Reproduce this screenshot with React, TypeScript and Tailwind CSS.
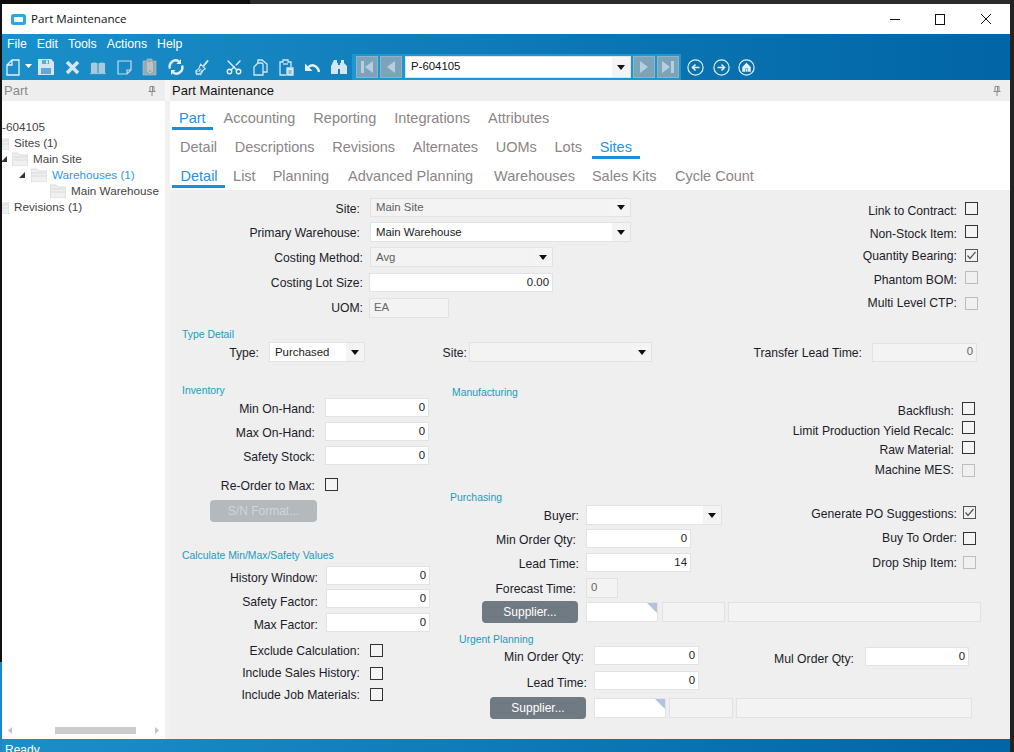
import React from "react";
import { Scissors } from "lucide-react";

const sans = "font-['Liberation_Sans',Arial,sans-serif]";

function Lbl({ className, children }: { className: string; children: React.ReactNode }) {
  return <span className={"shrink-0 text-right whitespace-nowrap text-[12.2px] leading-[14px] pt-[2px] text-[#1c1c2a] " + className}>{children}</span>;
}
function Arrow() {
  return (
    <svg width="8" height="5" viewBox="0 0 8 5" className="shrink-0"><path d="M0 0h8L4 5z" fill="#111" /></svg>
  );
}
function Select({ className, value, disabled }: { className: string; value?: string; disabled?: boolean }) {
  return (
    <div className={"shrink-0 flex items-stretch border border-[#e2e2e2] text-[11.4px] " + (disabled ? "bg-[#f3f3f3] text-[#5f5f5f] " : "bg-white text-[#222] ") + className}>
      <span className="flex-1 pl-[5px] pt-[1px] flex items-center">{value}</span>
      <span className="w-[18px] flex items-center justify-center bg-[#f4f4f4]"><Arrow /></span>
    </div>
  );
}
function Input({ className, value, disabled, left }: { className: string; value?: string; disabled?: boolean; left?: boolean }) {
  return (
    <div className={"shrink-0 flex items-center border border-[#e2e2e2] text-[11.4px] " + (left ? "justify-start pl-[4px] " : "justify-end pr-[3px] ") + (disabled ? "bg-[#f3f3f3] text-[#666] " : "bg-white text-[#222] ") + className}>{value}</div>
  );
}
function Box({ className = "", checked, disabled }: { className?: string; checked?: boolean; disabled?: boolean }) {
  return (
    <div className={"shrink-0 w-[13px] h-[13px] flex items-center justify-center border " + (disabled ? "border-[#bdbdbd] bg-[#f0f0f0] " : checked ? "border-[#555] bg-[#f2f2f2] " : "border-[#333] bg-[#f4f4f4] ") + className}>
      {checked && (
        <svg width="11" height="11" viewBox="0 0 11 11"><path d="M1.5 5.5 4 8.5 9.5 2" stroke="#555" strokeWidth="1.2" fill="none" /></svg>
      )}
    </div>
  );
}
function Heading({ className, children }: { className: string; children: React.ReactNode }) {
  return <div className={"h-[12px] leading-[14px] text-[10.4px] text-[#1b9bbd] whitespace-nowrap " + className}>{children}</div>;
}
function Check({ className, label, checked, disabled, box, lbl = "" }: { className: string; label: string; checked?: boolean; disabled?: boolean; box: string; lbl?: string }) {
  return (
    <div className={"flex items-center justify-end h-[13px] " + className}>
      <Lbl className={lbl}>{label}</Lbl>
      <Box className={box} checked={checked} disabled={disabled} />
    </div>
  );
}
function Lookup({ className }: { className: string }) {
  return (
    <div className={"relative shrink-0 bg-white border border-[#e2e2e2] overflow-hidden " + className}>
      <svg width="10" height="10" viewBox="0 0 10 10" className="absolute top-0 right-0"><path d="M0 0h10v10z" fill="#b3c5de" /></svg>
    </div>
  );
}
function Supplier({ className }: { className: string }) {
  return (
    <div className={"shrink-0 w-[96px] h-[22px] rounded-[4px] bg-[#6f7a82] text-white text-[12px] flex items-center justify-center " + className}>Supplier...</div>
  );
}
function Tab({ children, active, className }: { children: string; active?: boolean; className: string }) {
  return (
    <div className={"pt-[8px] h-[29px] leading-[18px] text-[14.5px] border-b-[3px] whitespace-nowrap " + (active ? "text-[#2a90e2] border-[#1a8fe0] " : "text-[#8b8585] border-transparent ") + className}>{children}</div>
  );
}
function Folder({ className }: { className: string }) {
  return (
    <svg width="16" height="14" viewBox="0 0 16 14" className={"shrink-0 " + className}>
      <path d="M0 1h6l2 2h8v11H0z" fill="#efefef" stroke="#d6d6d6" strokeWidth="0.8" />
      <path d="M0 5h16M0 8h16" stroke="#dcdcdc" strokeWidth="1" />
    </svg>
  );
}
function Tri({ className }: { className: string }) {
  return (
    <svg width="6" height="6" viewBox="0 0 6 6" className={"shrink-0 " + className}><path d="M6 0v6H0z" fill="#333" /></svg>
  );
}

const ic = "#d3e6f2";
const dim = "#a9c9dc";
function Tool({ children, className }: { children: React.ReactNode; className: string }) {
  return <div className={"shrink-0 w-[16px] h-[16px] flex items-center justify-center " + className}>{children}</div>;
}
function NavBtn({ d }: { d: string }) {
  return (
    <div className="w-[22px] h-[22px] shrink-0 bg-[#7ba4bb] border border-[#8fb3c8] flex items-center justify-center">
      <svg width="16" height="16" viewBox="0 0 16 16"><path d={d} fill="#b5cfdf" /></svg>
    </div>
  );
}
function Circle({ children, className }: { children: React.ReactNode; className: string }) {
  return (
    <svg width="17" height="17" viewBox="0 0 17 17" className={"shrink-0 " + className}>
      <circle cx="8.5" cy="8.5" r="7.6" fill="none" stroke="#e3eff6" strokeWidth="1.2" />
      {children}
    </svg>
  );
}

export default function App() {
  return (
    <div className={"w-[1014px] h-[752px] flex bg-[#222] overflow-hidden " + sans}>
      <div className="w-[2px] flex flex-col shrink-0">
        <div className="h-[662px] bg-[#111]" />
        <div className="flex-1 bg-[#1a8ac6]" />
      </div>
      <div className="w-[1008px] shrink-0 flex flex-col">
        <div className="h-[4px] flex shrink-0">
          <div className="w-[248px] bg-[#0c0c0c]" />
          <div className="flex-1 bg-[#2b2b2b]" />
        </div>
        {/* title bar */}
        <div className="h-[30px] bg-white flex items-center shrink-0">
          <svg width="15" height="11" viewBox="0 0 15 11" className="ml-[9px] mb-[-1px]">
            <rect width="15" height="11" rx="2.5" fill="#2aa8e6" />
            <rect x="3" y="3" width="9" height="5" rx="1" fill="#fff" />
          </svg>
          <span className="ml-[5px] text-[11.6px] text-[#111] font-['Open_Sans',sans-serif]">Part Maintenance</span>
          <svg width="116" height="14" viewBox="0 0 116 14" className="ml-auto mr-[4px]" fill="none" stroke="#111" strokeWidth="1">
            <path d="M0 7.5h10" />
            <rect x="45.5" y="2.5" width="9" height="10" />
            <path d="M91 2l10 10M101 2 91 12" />
          </svg>
        </div>
        {/* blue header */}
        <div className="h-[46px] shrink-0 bg-linear-to-r from-[#1b8fc9] to-[#0265a5] flex flex-col">
          <div className="h-[20px] flex items-center pl-[5px] gap-[10px] text-white text-[12.3px] leading-[20px]">
            <span>File</span><span>Edit</span><span>Tools</span><span>Actions</span><span>Help</span>
          </div>
          <div className="h-[26px] flex items-center">
            <Tool className="ml-[3px]">
              <svg width="14" height="17" viewBox="0 0 14 17" fill="none" stroke="#e6f1f7" strokeWidth="1.3"><path d="M6 1h7v15H1V6zM6 1v5H1" /></svg>
            </Tool>
            <svg width="7" height="4" viewBox="0 0 7 4" className="ml-[4px] mb-[3px]"><path d="M0 0h7L3.5 4z" fill="#fff" /></svg>
            <Tool className="ml-[6px]">
              <svg width="16" height="16" viewBox="0 0 16 16"><path d="M0 0h13l3 3v13H0z" fill={ic} /><path d="M4 1h7v4H4zM3 9h10v6H3z" fill="#5fa9d4" /><path d="M8 1.5h2v3H8z" fill={ic} /></svg>
            </Tool>
            <Tool className="ml-[10px]">
              <svg width="15" height="15" viewBox="0 0 15 15"><path d="M2 2l11 11M13 2 2 13" stroke={ic} strokeWidth="3.6" /></svg>
            </Tool>
            <Tool className="ml-[10px]">
              <svg width="17" height="15" viewBox="0 0 17 15"><path d="M1 3c2-1 5-1 7 0v11c-2-1-5-1-7 0zM9 3c2-1 5-1 7 0v11c-2-1-5-1-7 0z" fill={dim} /><path d="M0 14h17" stroke={dim} /></svg>
            </Tool>
            <Tool className="ml-[10px]">
              <svg width="15" height="15" viewBox="0 0 15 15" fill="none" stroke="#c6dde9" strokeWidth="1.2"><path d="M1 1h13v9l-4 4H1zM14 10h-4v4" /></svg>
            </Tool>
            <Tool className="ml-[10px]">
              <svg width="16" height="18" viewBox="0 0 16 18"><path d="M1 3h4V1h5v2h4v14H1z" fill="#97a9b3" stroke="#b6c6cf" strokeWidth="0.6" /><path d="M6 4v9c0 2 4 2 4 0V5c0-1-2-1-2 0v7" fill="none" stroke="#ddd" strokeWidth="1" /></svg>
            </Tool>
            <Tool className="ml-[10px]">
              <svg width="16" height="16" viewBox="0 0 16 16" fill="none" stroke="#e6f1f7" strokeWidth="2.4"><path d="M2 9.5A6 6 0 0 1 11 2.5" /><path d="M14 6.5A6 6 0 0 1 5 13.5" /><path d="M13 0v5H8.5z" fill="#e6f1f7" stroke="none" /><path d="M3 16v-5h4.5z" fill="#e6f1f7" stroke="none" /></svg>
            </Tool>
            <Tool className="ml-[10px]">
              <svg width="17" height="17" viewBox="0 0 17 17" fill="none" stroke={ic} strokeWidth="1.2"><path d="M10 7l5-6" strokeWidth="2" /><path d="M7 5l5 5-2 1-3 5-1-1-1 1-1-1-1 1-1-2 1-1-1 0 0-1 3-2z" /><path d="M7 10l-2 3M9 11l-2 3" /></svg>
            </Tool>
            <Tool className="ml-[16px]"><Scissors size={18} color="#e6f1f7" strokeWidth={1.8} className="shrink-0 -rotate-90" /></Tool>
            <Tool className="ml-[10px]">
              <svg width="15" height="17" viewBox="0 0 15 17" fill="none" stroke={ic} strokeWidth="1.3"><path d="M5 4V1h4l5 4v8h-4" /><path d="M5 4h4l1 1v11H1V8z" /></svg>
            </Tool>
            <Tool className="ml-[10px]">
              <svg width="15" height="17" viewBox="0 0 15 17" fill="none" stroke={ic} strokeWidth="1.3"><path d="M7 16H1V3h3V1h5v2h3v5" /><path d="M4 5h5" /><path d="M8 9h6v7H8z" fill={ic} /><path d="M9.5 12h3M9.5 14h3" stroke="#3a93c6" strokeWidth="1" /></svg>
            </Tool>
            <Tool className="ml-[10px]">
              <svg width="16" height="12" viewBox="0 0 16 12" fill="none"><path d="M15 11C14 5 8 2 4 6.5" stroke="#e6f1f7" strokeWidth="2.4" /><path d="M1 2.5v7.5h7.5z" fill="#e6f1f7" /></svg>
            </Tool>
            <Tool className="ml-[11px]">
              <svg width="16" height="16" viewBox="0 0 16 16"><path d="M3 1h3v3h1v11H0V7zM10 1h3v3l3 3v8H9V4h1z" fill={ic} /><path d="M7 6h2v4H7z" fill={ic} /></svg>
            </Tool>
            {/* navigation box */}
            <div className="ml-[5px] w-[329px] h-[26px] bg-[#1b98d2] flex items-center pl-[4px] gap-[2px]">
              <NavBtn d="M2 2h3v12H2zM14 2v12L6 8z" />
              <NavBtn d="M12 2v12L4 8z" />
              <div className="w-[226px] h-[22px] ml-[1px] bg-white border border-[#e2e2e2] flex items-stretch shrink-0">
                <span className="flex-1 pl-[5px] flex items-center text-[11.4px] text-[#111]">P-604105</span>
                <span className="w-[18px] bg-[#f4f4f4] flex items-center justify-center"><svg width="8" height="5" viewBox="0 0 8 5"><path d="M0 0h8L4 5z" fill="#111" /></svg></span>
              </div>
              <NavBtn d="M4 2v12l8-6z" />
              <NavBtn d="M11 2h3v12h-3zM2 2v12l8-6z" />
            </div>
            <Circle className="ml-[6px]"><path d="M12.5 8.5H6M8.5 5.5l-3 3 3 3" stroke="#e3eff6" strokeWidth="1.6" fill="none" /></Circle>
            <Circle className="ml-[9px]"><path d="M4.5 8.5H11M8.5 5.5l3 3-3 3" stroke="#e3eff6" strokeWidth="1.6" fill="none" /></Circle>
            <Circle className="ml-[8px]"><path d="M8.5 3.5 13 8v5H4V8zM7.5 13V9.5h2V13" fill="#e3eff6" stroke="#0f78b3" strokeWidth="0.5" /></Circle>
          </div>
        </div>
        {/* panes */}
        <div className="flex-1 flex min-h-0">
          <div className="w-[163px] shrink-0 flex flex-col bg-white overflow-hidden">
            <div className="h-[21px] shrink-0 bg-[#eeeeee] flex items-center pl-[2px] text-[13px] text-[#8a8a8a]">
              <span>Part</span>
              <svg width="8" height="10" viewBox="0 0 8 10" className="ml-auto mr-[9px]" fill="none" stroke="#8a8a8a" strokeWidth="1"><path d="M2 .5h4v5H2zM.5 5.5h7M4 5.5V10M4.5 1v4" /></svg>
            </div>
            <div className="pt-[18px] text-[11.7px] text-[#444] whitespace-nowrap">
              <div className="h-[16px] flex items-center">-604105</div>
              <div className="h-[16px] flex items-center"><Folder className="-ml-[9px]" /><span className="ml-[5px]">Sites (1)</span></div>
              <div className="h-[16px] flex items-center"><Tri className="-ml-[1px]" /><Folder className="ml-[5px]" /><span className="ml-[5px]">Main Site</span></div>
              <div className="h-[16px] flex items-center"><Tri className="ml-[17px]" /><Folder className="ml-[6px]" /><span className="ml-[5px] text-[#2e98ee]">Warehouses (1)</span></div>
              <div className="h-[16px] flex items-center"><Folder className="ml-[48px]" /><span className="ml-[5px]">Main Warehouse</span></div>
              <div className="h-[16px] flex items-center"><Folder className="-ml-[9px]" /><span className="ml-[5px]">Revisions (1)</span></div>
            </div>
            <div className="mt-auto mb-[5px] h-[7px] flex items-center shrink-0">
              <svg width="4" height="7" viewBox="0 0 4 7" className="ml-[6px]"><path d="M4 0v7L0 3.5z" fill="#c4c4c4" /></svg>
              <div className="ml-[43px] w-[81px] h-[7px] bg-[#cccccc]" />
              <svg width="4" height="7" viewBox="0 0 4 7" className="ml-[19px]"><path d="M0 0v7l4-3.5z" fill="#c4c4c4" /></svg>
            </div>
          </div>
          <div className="w-[5px] shrink-0 flex flex-col bg-[#f1f1f1]">
            <div className="h-[21px] bg-[#f7f7f7]" />
          </div>
          <div className="flex-1 flex flex-col min-w-0">
            <div className="h-[21px] shrink-0 bg-[#eeeeee] flex items-center pl-[2px] text-[13px] text-[#111]">
              <span>Part Maintenance</span>
              <svg width="8" height="10" viewBox="0 0 8 10" className="ml-auto mr-[9px]" fill="none" stroke="#8a8a8a" strokeWidth="1"><path d="M2 .5h4v5H2zM.5 5.5h7M4 5.5V10M4.5 1v4" /></svg>
            </div>
            {/* tabs */}
            <div className="h-[89px] shrink-0 bg-white flex flex-col pl-[2px]">
              <div className="flex gap-[4px]">
                <Tab active className="px-[7px]">Part</Tab>
                <Tab className="px-[7px]">Accounting</Tab>
                <Tab className="px-[7px]">Reporting</Tab>
                <Tab className="px-[7px]">Integrations</Tab>
                <Tab className="px-[7px]">Attributes</Tab>
              </div>
              <div className="flex gap-[1.7px]">
                <Tab className="px-[8px]">Detail</Tab>
                <Tab className="px-[8px]">Descriptions</Tab>
                <Tab className="px-[8px]">Revisions</Tab>
                <Tab className="px-[8px]">Alternates</Tab>
                <Tab className="px-[8px]">UOMs</Tab>
                <Tab className="px-[8px]">Lots</Tab>
                <Tab active className="px-[8px]">Sites</Tab>
              </div>
              <div className="flex">
                <Tab active className="pl-[8.5px] pr-[7px]">Detail</Tab>
                <Tab className="px-[8.5px]">List</Tab>
                <Tab className="px-[8.5px]">Planning</Tab>
                <Tab className="px-[8.5px] ml-[2px]">Advanced Planning</Tab>
                <Tab className="px-[8.5px] ml-[4px]">Warehouses</Tab>
                <Tab className="px-[8.5px]">Sales Kits</Tab>
                <Tab className="px-[8.5px] ml-[1.5px]">Cycle Count</Tab>
              </div>
            </div>
            {/* form */}
            <div className="flex-1 bg-[#efefef] flex flex-col min-h-0">
              {/* site band */}
              <div className="flex pt-[8px] h-[128px] shrink-0">
                <div className="flex flex-col">
                  <div className="flex items-center h-[19px]"><Lbl className="w-[190px]">Site:</Lbl><Select className="ml-[10px] w-[261px] h-[19px]" value="Main Site" disabled /></div>
                  <div className="flex items-center h-[20px] mt-[5px]"><Lbl className="w-[190px]">Primary Warehouse:</Lbl><Select className="ml-[10px] w-[261px] h-[20px]" value="Main Warehouse" /></div>
                  <div className="flex items-center h-[20px] mt-[5px]"><Lbl className="w-[193px]">Costing Method:</Lbl><Select className="ml-[7px] w-[183px] h-[20px]" value="Avg" disabled /></div>
                  <div className="flex items-center h-[19px] mt-[6px]"><Lbl className="w-[193px] -translate-y-[1px]">Costing Lot Size:</Lbl><Input className="ml-[6px] w-[184px] h-[19px]" value="0.00" /></div>
                  <div className="flex items-center h-[20px] mt-[6px]"><Lbl className="w-[193px] -translate-y-[1px]">UOM:</Lbl><Input className="ml-[6px] w-[80px] h-[20px]" value="EA" disabled left /></div>
                </div>
                <div className="ml-auto pr-[32px] pt-[4px] flex flex-col">
                  <Check className="" label="Link to Contract:" box="ml-[8px]" lbl="translate-y-[1px]" />
                  <Check className="mt-[10px]" label="Non-Stock Item:" box="ml-[8px]" lbl="translate-y-[1px]" />
                  <Check className="mt-[11px]" label="Quantity Bearing:" box="ml-[8px]" lbl="-translate-y-[1px]" checked />
                  <Check className="mt-[9px]" label="Phantom BOM:" box="ml-[8px]" lbl="translate-y-[1px]" disabled />
                  <Check className="mt-[13px]" label="Multi Level CTP:" box="ml-[8px]" lbl="-translate-y-[2px]" disabled />
                </div>
              </div>
              {/* type detail */}
              <Heading className="mt-[10px] pl-[12px] shrink-0">Type Detail</Heading>
              <div className="mt-[2px] h-[20px] flex items-center shrink-0">
                <Lbl className="w-[89px]">Type:</Lbl>
                <Select className="ml-[10px] w-[96px] h-[20px]" value="Purchased" />
                <Lbl className="w-[102px]">Site:</Lbl>
                <Select className="ml-[2px] w-[183px] h-[20px]" disabled />
                <Lbl className="w-[210px]">Transfer Lead Time:</Lbl>
                <Input className="ml-[10px] w-[105px] h-[19px]" value="0" disabled />
              </div>
              {/* lower columns */}
              <div className="flex flex-1 min-h-0">
                <div className="w-[280px] shrink-0 flex flex-col">
                  <Heading className="mt-[22px] pl-[12px]">Inventory</Heading>
                  <div className="mt-[2px] flex items-center h-[19px]"><Lbl className="w-[145px]">Min On-Hand:</Lbl><Input className="ml-[10px] w-[104px] h-[19px]" value="0" /></div>
                  <div className="mt-[5px] flex items-center h-[19px]"><Lbl className="w-[145px]">Max On-Hand:</Lbl><Input className="ml-[10px] w-[104px] h-[19px]" value="0" /></div>
                  <div className="mt-[5px] flex items-center h-[19px]"><Lbl className="w-[145px]">Safety Stock:</Lbl><Input className="ml-[10px] w-[104px] h-[19px]" value="0" /></div>
                  <div className="mt-[13px] flex items-center h-[13px]"><Lbl className="w-[145px]">Re-Order to Max:</Lbl><Box className="ml-[10px]" /></div>
                  <div className="mt-[9px] ml-[40px] w-[107px] h-[22px] rounded-[4px] bg-[#b4b9bd] text-[#d2d5d8] text-[12px] flex items-center justify-center">S/N Format...</div>
                  <Heading className="mt-[27px] pl-[12px]">Calculate Min/Max/Safety Values</Heading>
                  <div className="mt-[5px] flex items-center h-[19px]"><Lbl className="w-[148px] translate-y-[1px]">History Window:</Lbl><Input className="ml-[8px] w-[104px] h-[19px]" value="0" /></div>
                  <div className="mt-[4px] flex items-center h-[19px]"><Lbl className="w-[148px] translate-y-[2px]">Safety Factor:</Lbl><Input className="ml-[8px] w-[104px] h-[19px]" value="0" /></div>
                  <div className="mt-[5px] flex items-center h-[19px]"><Lbl className="w-[148px] translate-y-[1px]">Max Factor:</Lbl><Input className="ml-[8px] w-[104px] h-[19px]" value="0" /></div>
                  <div className="mt-[12px] flex items-center h-[13px]"><Lbl className="w-[190px] -translate-y-[1px]">Exclude Calculation:</Lbl><Box className="ml-[10px]" /></div>
                  <div className="mt-[10px] flex items-center h-[13px]"><Lbl className="w-[190px] -translate-y-[2px]">Include Sales History:</Lbl><Box className="ml-[10px]" /></div>
                  <div className="mt-[8px] flex items-center h-[13px]"><Lbl className="w-[190px] -translate-y-[1px]">Include Job Materials:</Lbl><Box className="ml-[10px]" /></div>
                </div>
                <div className="flex-1 flex flex-col min-w-0">
                  <Heading className="mt-[24px] pl-[2px]">Manufacturing</Heading>
                  <div className="mt-[4px] pr-[35px] flex flex-col">
                    <Check className="" label="Backflush:" box="ml-[8px]" lbl="translate-y-[1px]" />
                    <Check className="mt-[6px]" label="Limit Production Yield Recalc:" box="ml-[8px]" lbl="translate-y-[2px]" />
                    <Check className="mt-[7px]" label="Raw Material:" box="ml-[8px]" lbl="translate-y-[1px]" />
                    <Check className="mt-[10px]" label="Machine MES:" box="ml-[8px]" lbl="-translate-y-[2px]" disabled />
                  </div>
                  <Heading className="mt-[14px]">Purchasing</Heading>
                  <div className="mt-[2px] flex justify-between h-[93px] shrink-0">
                    <div className="flex flex-col">
                      <div className="flex items-center h-[20px]"><Lbl className="w-[129px]">Buyer:</Lbl><Select className="ml-[7px] w-[136px] h-[20px]" /></div>
                      <div className="mt-[4px] flex items-center h-[19px]"><Lbl className="w-[126px]">Min Order Qty:</Lbl><Input className="ml-[10px] w-[105px] h-[19px]" value="0" /></div>
                      <div className="mt-[5px] flex items-center h-[19px]"><Lbl className="w-[129px]">Lead Time:</Lbl><Input className="ml-[7px] w-[105px] h-[19px]" value="14" /></div>
                      <div className="mt-[6px] flex items-center h-[20px]"><Lbl className="w-[126px]">Forecast Time:</Lbl><Input className="ml-[10px] w-[32px] h-[20px]" value="0" disabled left /></div>
                    </div>
                    <div className="pr-[34px] pt-[1px] flex flex-col">
                      <Check className="" label="Generate PO Suggestions:" box="ml-[6px]" checked />
                      <Check className="mt-[13px]" label="Buy To Order:" box="ml-[6px]" lbl="-translate-y-[2px]" />
                      <Check className="mt-[11px]" label="Drop Ship Item:" box="ml-[6px]" lbl="-translate-y-[1px]" disabled />
                    </div>
                  </div>
                  <div className="mt-[3px] h-[22px] flex items-center shrink-0">
                    <Supplier className="ml-[32px]" />
                    <Lookup className="ml-[8px] w-[72px] h-[20px]" />
                    <Input className="ml-[4px] w-[63px] h-[20px]" disabled />
                    <Input className="ml-[3px] w-[253px] h-[20px]" disabled />
                  </div>
                  <Heading className="mt-[10px] pl-[9px]">Urgent Planning</Heading>
                  <div className="mt-[1px] flex items-start h-[20px] shrink-0">
                    <Lbl className="w-[134px] mt-[2px]">Min Order Qty:</Lbl>
                    <Input className="ml-[10px] w-[105px] h-[19px]" value="0" />
                    <Lbl className="w-[155px] mt-[4px]">Mul Order Qty:</Lbl>
                    <Input className="ml-[11px] mt-[1px] w-[104px] h-[19px]" value="0" />
                  </div>
                  <div className="mt-[5px] flex items-center h-[19px] shrink-0"><Lbl className="w-[137px] translate-y-[1px]">Lead Time:</Lbl><Input className="ml-[7px] w-[105px] h-[19px]" value="0" /></div>
                  <div className="mt-[7px] h-[22px] flex items-center shrink-0">
                    <Supplier className="ml-[40px]" />
                    <Lookup className="ml-[8px] w-[72px] h-[20px]" />
                    <Input className="ml-[3px] w-[64px] h-[20px]" disabled />
                    <Input className="ml-[3px] w-[236px] h-[20px]" disabled />
                  </div>
                </div>
              </div>
            </div>
          </div>
        </div>
        {/* status bar */}
        <div className="h-[13px] shrink-0 overflow-hidden bg-linear-to-r from-[#1b8fc9] to-[#0265a5] pl-[3px] pt-[4px] text-white text-[12px] leading-[14px]">Ready</div>
      </div>
      <div className="w-[4px] shrink-0 bg-[#222]" />
    </div>
  );
}
